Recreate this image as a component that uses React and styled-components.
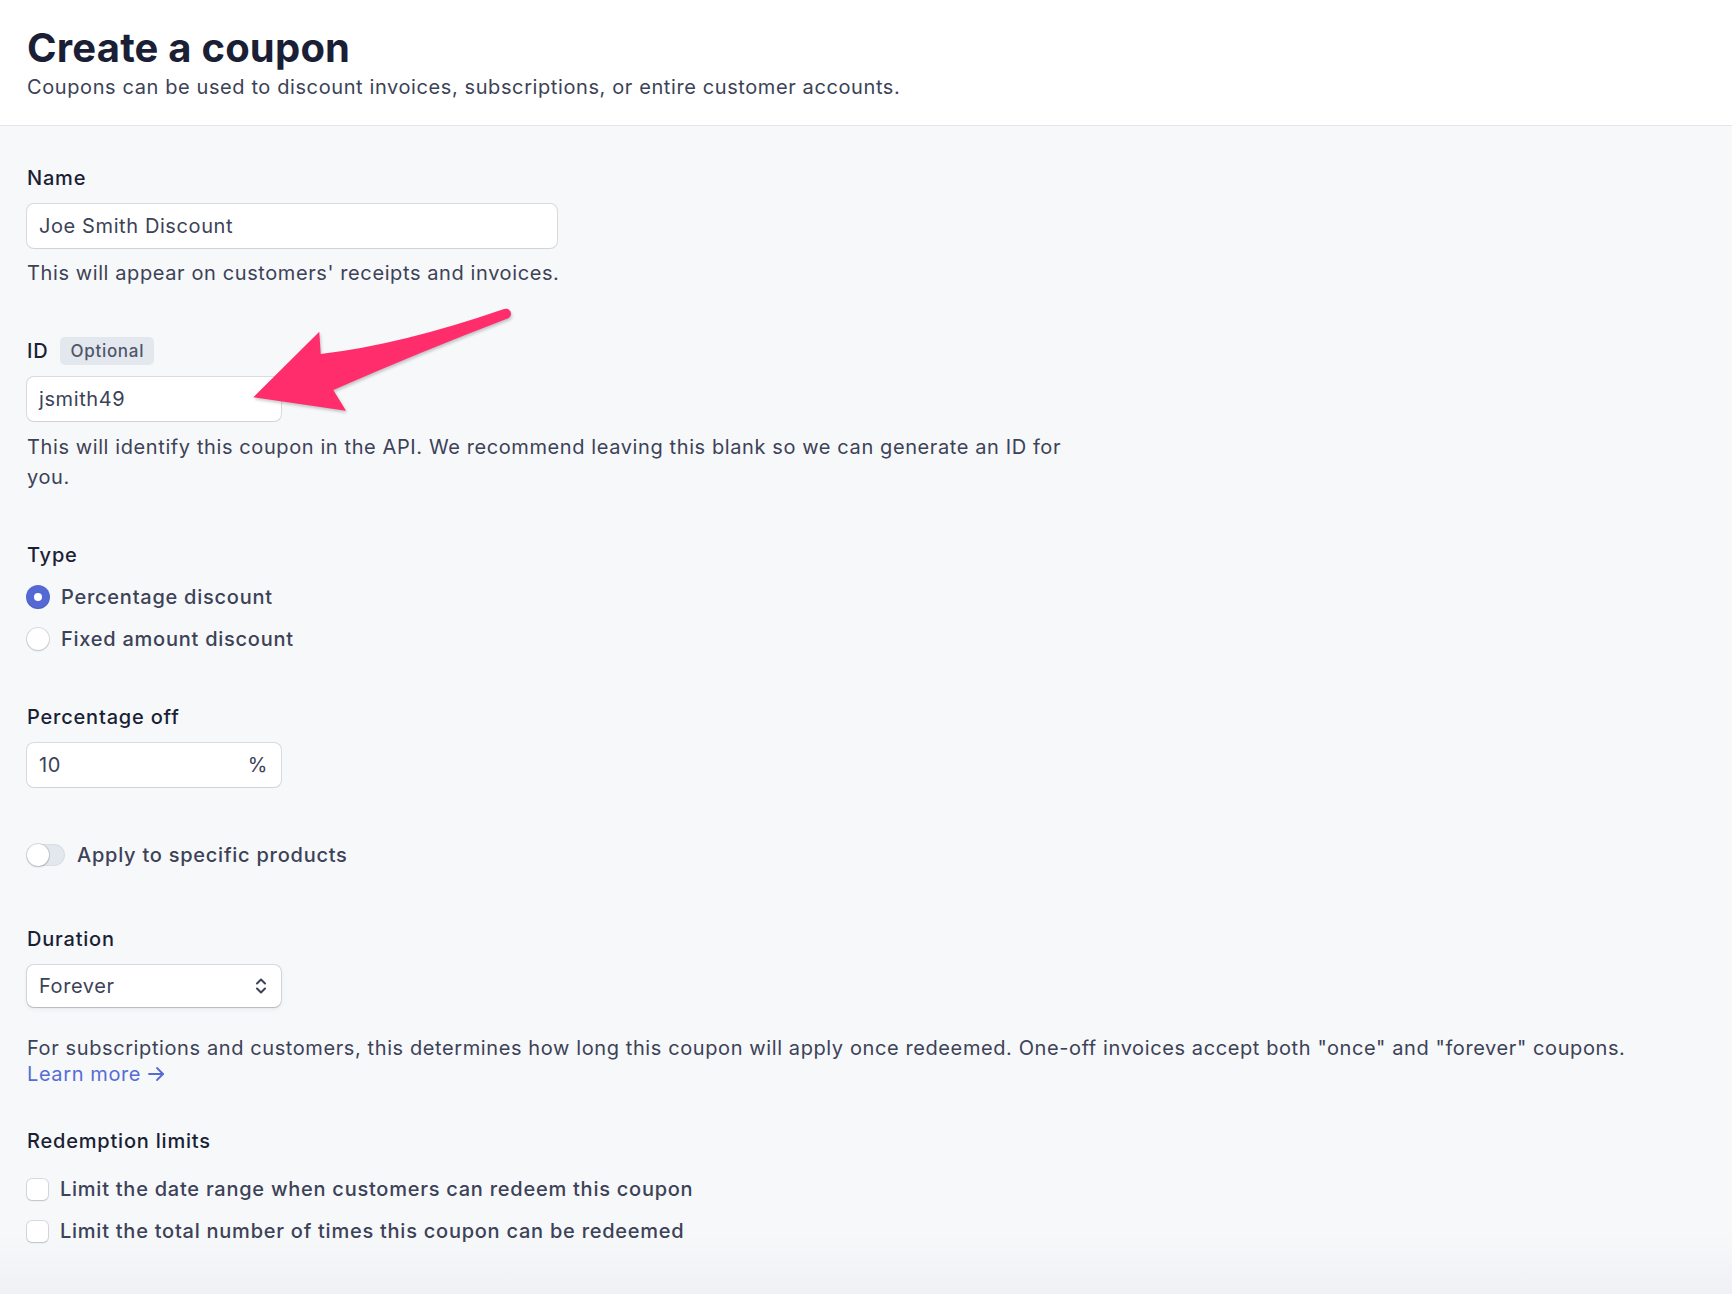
import React from 'react'
import styled, { createGlobalStyle } from 'styled-components'

const GlobalStyle = createGlobalStyle`
  body {
    margin: 0;
    background: #f7f8fa;
    font-family: Inter, "Noto Sans", sans-serif;
    color: #3c4257;
    letter-spacing: 0.6px;
    -webkit-font-smoothing: antialiased;
  }
`

const Page = styled.div`
  position: relative;
  min-height: 100vh;
  display: flex;
  flex-direction: column;
`

const Header = styled.header`
  background: #fff;
  border-bottom: 1px solid #e3e6eb;
  padding: 24px 27px 24px;
`

const Title = styled.h1`
  margin: 0;
  font-size: 40px;
  line-height: 48px;
  font-weight: 700;
  color: #1a1f36;
  letter-spacing: 0.2px;
`

const Subtitle = styled.p`
  margin: 1px 0 0;
  font-size: 20px;
  line-height: 28px;
  color: #3c4257;
`

const Form = styled.main`
  flex: 1;
  padding: 38px 27px 40px;
  background: linear-gradient(to bottom, #f7f8fa calc(100% - 60px), #eff1f4 100%);
`

const Section = styled.section`
  margin-top: ${props => props.$mt || 0}px;
`

const LabelRow = styled.div`
  display: flex;
  align-items: center;
  gap: 12px;
  margin-bottom: 12px;
`

const Label = styled.label`
  font-size: 20px;
  line-height: 28px;
  font-weight: 500;
  color: #1a1f36;
  letter-spacing: 0.8px;
`

const Badge = styled.span`
  display: inline-flex;
  align-items: center;
  height: 28px;
  padding: 0 10px;
  border-radius: 5px;
  background: #e3e8ee;
  color: #4f566b;
  font-size: 17px;
  font-weight: 500;
  letter-spacing: 0.7px;
`

const InputBox = styled.div`
  box-sizing: border-box;
  display: flex;
  align-items: center;
  width: ${props => props.$width}px;
  height: 44px;
  padding: 0 13px 0 12px;
  background: #fff;
  border-radius: 7px;
  box-shadow: 0 0 0 1px rgba(60, 66, 87, 0.16), 0 1px 1px rgba(0, 0, 0, 0.04);
  font-size: 20px;
  color: #3c4257;
`

const Value = styled.span`
  flex: 1;
`

const Suffix = styled.span`
  color: #3c4257;
`

const Select = styled(InputBox)`
  height: 42px;
  padding-right: 14px;
  box-shadow: 0 0 0 1px rgba(60, 66, 87, 0.16), 0 1px 1px rgba(0, 0, 0, 0.12),
    0 2px 5px rgba(60, 66, 87, 0.08);
`

const Help = styled.p`
  margin: ${props => props.$mt || 9}px 0 0;
  max-width: ${props => props.$max ? `${props.$max}px` : 'none'};
  font-size: 20px;
  line-height: ${props => props.$lh || 28}px;
  color: #3c4257;
`

const Link = styled.a`
  color: #556cd6;
  text-decoration: none;
  display: inline-flex;
  align-items: center;
  gap: 6px;
`

const Options = styled.div`
  display: flex;
  flex-direction: column;
  gap: 14px;
  margin-top: ${props => props.$mt || 14}px;
`

const OptionRow = styled.div`
  display: flex;
  align-items: center;
  gap: 12px;
  font-size: 20px;
  line-height: 28px;
  font-weight: 500;
  color: #3c4257;
  letter-spacing: 0.75px;
`

const Radio = styled.span`
  box-sizing: border-box;
  width: 22px;
  height: 22px;
  border-radius: 50%;
  display: flex;
  align-items: center;
  justify-content: center;
  background: ${props => (props.$checked ? '#5469d4' : '#fff')};
  box-shadow: ${props =>
    props.$checked
      ? '0 1px 1px rgba(0,0,0,0.12), 0 0 0 1px #5469d4'
      : '0 0 0 1px rgba(60,66,87,0.16), 0 1px 2px rgba(0,0,0,0.12)'};

  &::after {
    content: '';
    display: ${props => (props.$checked ? 'block' : 'none')};
    width: 8px;
    height: 8px;
    border-radius: 50%;
    background: #fff;
  }
`

const Checkbox = styled.span`
  width: 21px;
  height: 21px;
  border-radius: 5px;
  background: #fff;
  box-shadow: 0 0 0 1px rgba(60, 66, 87, 0.16), 0 1px 2px rgba(0, 0, 0, 0.12);
`

const Toggle = styled.span`
  position: relative;
  width: 38px;
  height: 22px;
  border-radius: 11px;
  background: #e3e8ee;
  box-shadow: inset 0 0 0 1px rgba(60, 66, 87, 0.06);

  &::after {
    content: '';
    position: absolute;
    left: 0;
    top: 0;
    width: 22px;
    height: 22px;
    border-radius: 50%;
    background: #fff;
    box-shadow: 0 0 0 1px rgba(60, 66, 87, 0.16), 0 1px 2px rgba(0, 0, 0, 0.18);
  }
`

const Callout = styled.svg`
  position: absolute;
  left: 240px;
  top: 300px;
  overflow: visible;
  filter: drop-shadow(1px 2px 1.5px rgba(0, 0, 0, 0.22));
`

const Chevrons = () => (
  <svg width="12" height="18" viewBox="0 0 12 18" fill="none" stroke="#3c4257" strokeWidth="2" strokeLinecap="round" strokeLinejoin="round">
    <path d="M2 6.5 L6 2.5 L10 6.5" />
    <path d="M2 11.5 L6 15.5 L10 11.5" />
  </svg>
)

const ArrowRight = () => (
  <svg width="18" height="18" viewBox="0 0 18 18" fill="none" stroke="#556cd6" strokeWidth="1.8" strokeLinecap="round" strokeLinejoin="round">
    <path d="M2 9 H16" />
    <path d="M10 3 L16 9 L10 15" />
  </svg>
)

// pink arrow drawn over the ID field, coordinates relative to (240, 300)
const PointerArrow = () => (
  <Callout width="280" height="120" viewBox="0 0 280 120">
    <path
      fill="#ff2d6b"
      d="M80.7 54 Q160 45 263.3 9.3 A4.6 4.6 0 0 1 268.3 18.3 Q180 52 93.3 90 L106 110.7 L13.3 97.3 L79.3 31.7 Z"
    />
  </Callout>
)

const App = () => {
  return (
    <Page>
      <GlobalStyle />
      <Header>
        <Title>Create a coupon</Title>
        <Subtitle>Coupons can be used to discount invoices, subscriptions, or entire customer accounts.</Subtitle>
      </Header>
      <Form>
        <Section>
          <LabelRow>
            <Label>Name</Label>
          </LabelRow>
          <InputBox $width={530}>
            <Value>Joe Smith Discount</Value>
          </InputBox>
          <Help $mt={11}>This will appear on customers' receipts and invoices.</Help>
        </Section>

        <Section $mt={50}>
          <LabelRow>
            <Label>ID</Label>
            <Badge>Optional</Badge>
          </LabelRow>
          <InputBox $width={254}>
            <Value>jsmith49</Value>
          </InputBox>
          <Help $mt={11} $lh={30} $max={1060}>
            This will identify this coupon in the API. We recommend leaving this blank so we can generate an ID for you.
          </Help>
        </Section>

        <Section $mt={49}>
          <Label>Type</Label>
          <Options>
            <OptionRow>
              <Radio $checked />
              Percentage discount
            </OptionRow>
            <OptionRow>
              <Radio />
              Fixed amount discount
            </OptionRow>
          </Options>
        </Section>

        <Section $mt={50}>
          <LabelRow>
            <Label>Percentage off</Label>
          </LabelRow>
          <InputBox $width={254}>
            <Value>10</Value>
            <Suffix>%</Suffix>
          </InputBox>
        </Section>

        <Section $mt={54}>
          <OptionRow>
            <Toggle />
            Apply to specific products
          </OptionRow>
        </Section>

        <Section $mt={56}>
          <LabelRow>
            <Label>Duration</Label>
          </LabelRow>
          <Select $width={254}>
            <Value>Forever</Value>
            <Chevrons />
          </Select>
          <Help $mt={28} $lh={26}>
            For subscriptions and customers, this determines how long this coupon will apply once redeemed. One-off invoices accept both "once" and "forever" coupons.
            <br />
            <Link href="#">
              Learn more <ArrowRight />
            </Link>
          </Help>
        </Section>

        <Section $mt={40}>
          <Label>Redemption limits</Label>
          <Options $mt={20}>
            <OptionRow>
              <Checkbox />
              Limit the date range when customers can redeem this coupon
            </OptionRow>
            <OptionRow>
              <Checkbox />
              Limit the total number of times this coupon can be redeemed
            </OptionRow>
          </Options>
        </Section>
      </Form>
      <PointerArrow />
    </Page>
  )
}

export default App
